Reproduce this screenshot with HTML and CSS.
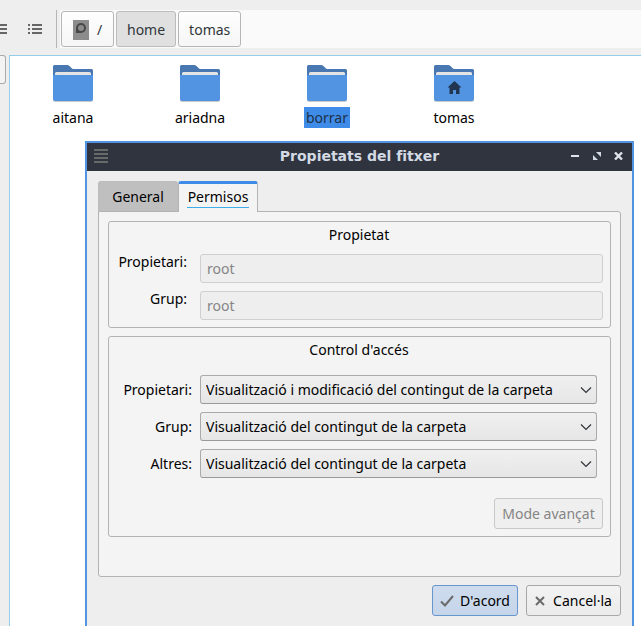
FILE: index.html
```html
<!DOCTYPE html>
<html lang="ca">
<head>
<meta charset="utf-8">
<title>Propietats del fitxer</title>
<link rel="stylesheet" href="styles.css">
</head>
<body>
<svg class="defs" aria-hidden="true">
  <symbol id="folder" viewBox="0 0 40 37">
    <path fill="#c9c9c9" d="M0 30h40v5a2 2 0 0 1-2 2H2a2 2 0 0 1-2-2z"/>
    <path fill="#4877b1" d="M0 1.500Q0 0 1.500 0H14q1.500 0 2.500 1l2.500 2.500q.8.500 2 .500H38.500Q40 4 40 5.500V16H0z"/>
    <path fill="#e4e4e4" d="M2 8.500Q2 7 3.500 7h33Q38 7 38 8.500V14H2z"/>
    <path fill="#5294e2" d="M0 10h40v24a2 2 0 0 1-2 2H2a2 2 0 0 1-2-2z"/>
  </symbol>
  <symbol id="chevron" viewBox="0 0 12 8">
    <path fill="none" stroke="#31363b" stroke-width="1.200" d="M1 1.500l5 5 5-5"/>
  </symbol>
</svg>
<main class="manager">
  <header class="toolbar">
    <button class="view" aria-label="Vista compacta"><svg width="8" height="10"><path fill="#666" d="M0 0h7v2H0zM0 4h7v2H0zM0 8h7v2H0z"/></svg></button>
    <button class="view" aria-label="Vista de llista"><svg width="14" height="10"><path fill="#666" d="M0 0h2v2H0zM4 0h10v2H4zM0 4h2v2H0zM4 4h10v2H4zM0 8h2v2H0zM4 8h10v2H4z"/></svg></button>
    <nav class="path">
      <button class="crumb disk"><svg width="16" height="20" aria-hidden="true"><rect width="16" height="20" fill="#8c8c8c"/><circle cx="8" cy="8" r="4" fill="none" stroke="#474747" stroke-width="2"/><path d="M3 8v5h5l-3-2z" fill="#474747"/></svg>/</button>
      <button class="crumb current">home</button>
      <button class="crumb">tomas</button>
    </nav>
  </header>
  <div class="content">
    <aside class="side"><button class="side-button" aria-label="Llocs"></button></aside>
    <section class="files">
      <figure class="file"><svg class="icon"><use href="#folder"/></svg><figcaption>aitana</figcaption></figure>
      <figure class="file"><svg class="icon"><use href="#folder"/></svg><figcaption>ariadna</figcaption></figure>
      <figure class="file selected"><svg class="icon"><use href="#folder"/></svg><figcaption>borrar</figcaption></figure>
      <figure class="file"><svg class="icon"><use href="#folder"/><path fill="#213550" d="M20.500 16l7 6.500h-2V29H22v-4h-3v4h-3.500v-6.500h-2z"/></svg><figcaption>tomas</figcaption></figure>
    </section>
  </div>
</main>

<form class="dialog" role="dialog" aria-labelledby="title">
  <header class="titlebar">
    <button type="button" class="win" aria-label="Menú"><svg width="14" height="14"><path fill="#666a69" d="M0 0h14v2H0zM0 4h14v2H0zM0 8h14v2H0zM0 12h14v2H0z"/></svg></button>
    <h1 id="title">Propietats del fitxer</h1>
    <div class="controls">
      <button type="button" class="win" aria-label="Minimitza"><svg width="9" height="8"><path fill="#dfe3ea" d="M0 3h8v2H0z"/></svg></button>
      <button type="button" class="win" aria-label="Maximitza"><svg width="8" height="8"><path fill="#d3dae3" d="M3 0h5v5zM0 3l5 5H0z"/></svg></button>
      <button type="button" class="win" aria-label="Tanca"><svg width="9" height="8"><path stroke="#dfe3ea" stroke-width="2.400" d="M1 .5l7 7M8 .5l-7 7"/></svg></button>
    </div>
  </header>
  <div class="body">
    <div class="tabs" role="tablist">
      <button type="button" class="tab" role="tab">General</button>
      <button type="button" class="tab active" role="tab" aria-selected="true"><span>Permisos</span></button>
    </div>
    <div class="panel">
      <section class="group">
        <h2>Propietat</h2>
        <div class="owner">
          <label for="owner">Propietari:</label><input id="owner" value="root" disabled>
          <label for="team">Grup:</label><input id="team" value="root" disabled>
        </div>
      </section>
      <section class="group">
        <h2>Control d'accés</h2>
        <div class="access">
          <label for="a1">Propietari:</label>
          <div class="combo"><select id="a1"><option>Visualització i modificació del contingut de la carpeta</option></select><svg class="arrow"><use href="#chevron"/></svg></div>
          <label for="a2">Grup:</label>
          <div class="combo"><select id="a2"><option>Visualització del contingut de la carpeta</option></select><svg class="arrow"><use href="#chevron"/></svg></div>
          <label for="a3">Altres:</label>
          <div class="combo"><select id="a3"><option>Visualització del contingut de la carpeta</option></select><svg class="arrow"><use href="#chevron"/></svg></div>
        </div>
        <div class="advanced"><button type="button" class="push" disabled>Mode avançat</button></div>
      </section>
    </div>
    <footer class="actions">
      <button type="button" class="push default"><svg width="14" height="12" aria-hidden="true"><path fill="none" stroke="#6a6a6a" stroke-width="2" d="M1 6.500L5 10.500 13 1"/></svg>D'acord</button>
      <button type="button" class="push cancel"><svg width="10" height="10" aria-hidden="true"><path stroke="#6a6a6a" stroke-width="2" d="M1 1l8 8M9 1l-8 8"/></svg>Cancel·la</button>
    </footer>
  </div>
</form>
</body>
</html>
```
FILE: styles.css
```css
* { box-sizing: border-box; }
body {
  margin: 0;
  height: 100vh;
  overflow: hidden;
  position: relative;
  background: #eee;
  color: #000;
  font: 14px/20px "Noto Sans", sans-serif;
  font-feature-settings: "locl" 0;
}
button, input, select { font: inherit; color: inherit; margin: 0; font-feature-settings: inherit; }
h1, h2, figure { margin: 0; }
svg { display: block; flex: none; }
.defs { position: absolute; width: 0; height: 0; }

.manager { height: 100%; display: flex; flex-direction: column; }
.toolbar { display: flex; align-items: center; height: 55px; padding: 3px 0 0; flex: none; }
.view { border: 0; padding: 0; background: none; margin-right: 20px; }
.view + .view { margin-right: 14px; }
.path {
  flex: 1;
  display: flex;
  gap: 2px;
  height: 38px;
  padding: 1px 4px;
  background: #fafafa;
  border-left: 1px solid #b5b5b5;
  box-shadow: inset 3px 0 #eee;
}
.crumb {
  display: flex;
  align-items: center;
  justify-content: center;
  gap: 8px;
  height: 36px;
  min-width: 59px;
  padding: 1px 10px 0;
  border: 1px solid #b6b6b6;
  border-radius: 3px;
  background: linear-gradient(#fefefe, #f6f6f6);
  color: #31363b;
}
.disk { min-width: 53px; }
.crumb.current { background: #e0e0e0; border-color: #bcbcbc; }

.content { flex: 1; display: flex; min-height: 0; }
.side { width: 9px; flex: none; }
.side-button {
  width: 6px;
  height: 29px;
  padding: 0;
  border: 1px solid #aaa;
  border-left: 0;
  border-radius: 0 3px 3px 0;
  background: #f3f3f3;
}
.files {
  flex: 1;
  display: grid;
  grid-template-columns: repeat(auto-fill, 127px);
  align-content: start;
  padding-top: 9px;
  background: #fff;
  border: solid #93cee9;
  border-width: 1px 0 0 1px;
}
.file { display: flex; flex-direction: column; align-items: center; gap: 5px; padding-right: 1px; }
.icon { width: 40px; height: 37px; }
.file figcaption { padding: 0 2px; line-height: 21px; }
.selected figcaption { background: #3f8ce8; color: #1c3048; }

.dialog {
  position: absolute;
  top: 141px;
  left: 85px;
  right: 7px;
  bottom: 0;
  overflow: hidden;
  border: 2px solid #5294e2;
  border-bottom: 0;
  background: #eee;
}
.titlebar {
  display: grid;
  grid-template-columns: 54px 1fr 52px;
  align-items: center;
  height: 28px;
  padding: 0 9px 2px 7px;
  background: #2f343f;
}
.titlebar h1 { color: #d3dae3; text-align: center; font: bold 14px/20px "DejaVu Sans", sans-serif; }
.controls { display: flex; justify-content: space-between; }
.win { border: 0; padding: 0; background: none; justify-self: start; }

.body { padding: 10px 11px; }
.tabs { display: flex; position: relative; z-index: 1; margin-bottom: -1px; }
.tab {
  height: 31px;
  min-width: 80px;
  padding: 0 8px;
  border: 1px solid #bdbdbd;
  border-bottom-color: #b3b3b3;
  border-radius: 3px 3px 0 0;
  background: #bfbfbf;
}
.tab.active {
  padding-bottom: 3px;
  border-color: #b3b3b3;
  border-top: 3px solid #3f8ce8;
  border-bottom: 0;
  background: #f4f4f4;
}
.tab span { display: block; line-height: 21px; border-bottom: 1px solid #3daee9; }
.panel {
  display: flex;
  flex-direction: column;
  gap: 8px;
  padding: 9px 9px 39px;
  border: 1px solid #b3b3b3;
  border-radius: 0 3px 3px 3px;
  background: #f4f4f4;
}
.group { border: 1px solid #b3b3b3; border-radius: 3px; padding: 3px 7px 7px 6px; }
.group h2 { font: inherit; text-align: center; }
.owner, .access { display: grid; grid-template-columns: 72px 1fr; gap: 8px 13px; padding-top: 9px; }
.owner label { line-height: 16px; text-align: right; }
.owner input {
  width: 100%;
  height: 29px;
  padding: 0 6px;
  border: 1px solid #cfcfcf;
  border-radius: 3px;
  background: #eee;
  color: #858585;
}
.access { grid-template-columns: 77px 1fr; gap: 8px; padding: 15px 6px 0 0; align-items: center; }
.access label { text-align: right; }
.combo { display: grid; align-items: center; }
.combo > * { grid-area: 1 / 1; }
.combo select {
  appearance: none;
  width: 100%;
  height: 29px;
  padding: 0 24px 0 5px;
  border: 1px solid #aaa;
  border-bottom-color: #999;
  border-radius: 3px;
  background: linear-gradient(#f0f0f0, #e6e6e6);
}
.arrow { width: 12px; height: 8px; justify-self: end; margin-right: 5px; pointer-events: none; }
.advanced { display: flex; justify-content: flex-end; padding-top: 20px; }
.push {
  display: flex;
  align-items: center;
  justify-content: center;
  gap: 6px;
  height: 31px;
  padding: 0 7px;
  border: 1px solid #a8a8a8;
  border-radius: 3px;
  background: linear-gradient(#f3f3f3, #ebebeb);
}
.push:disabled { min-width: 109px; border-color: #c8c8c8; background: #efefef; color: #858585; }
.push.default { min-width: 86px; border-color: #6796cc; background: linear-gradient(#cfdcee, #c5d5ea); }
.push.cancel { min-width: 95px; gap: 8px; }
.actions { display: flex; justify-content: flex-end; gap: 8px; padding-top: 8px; }
```
